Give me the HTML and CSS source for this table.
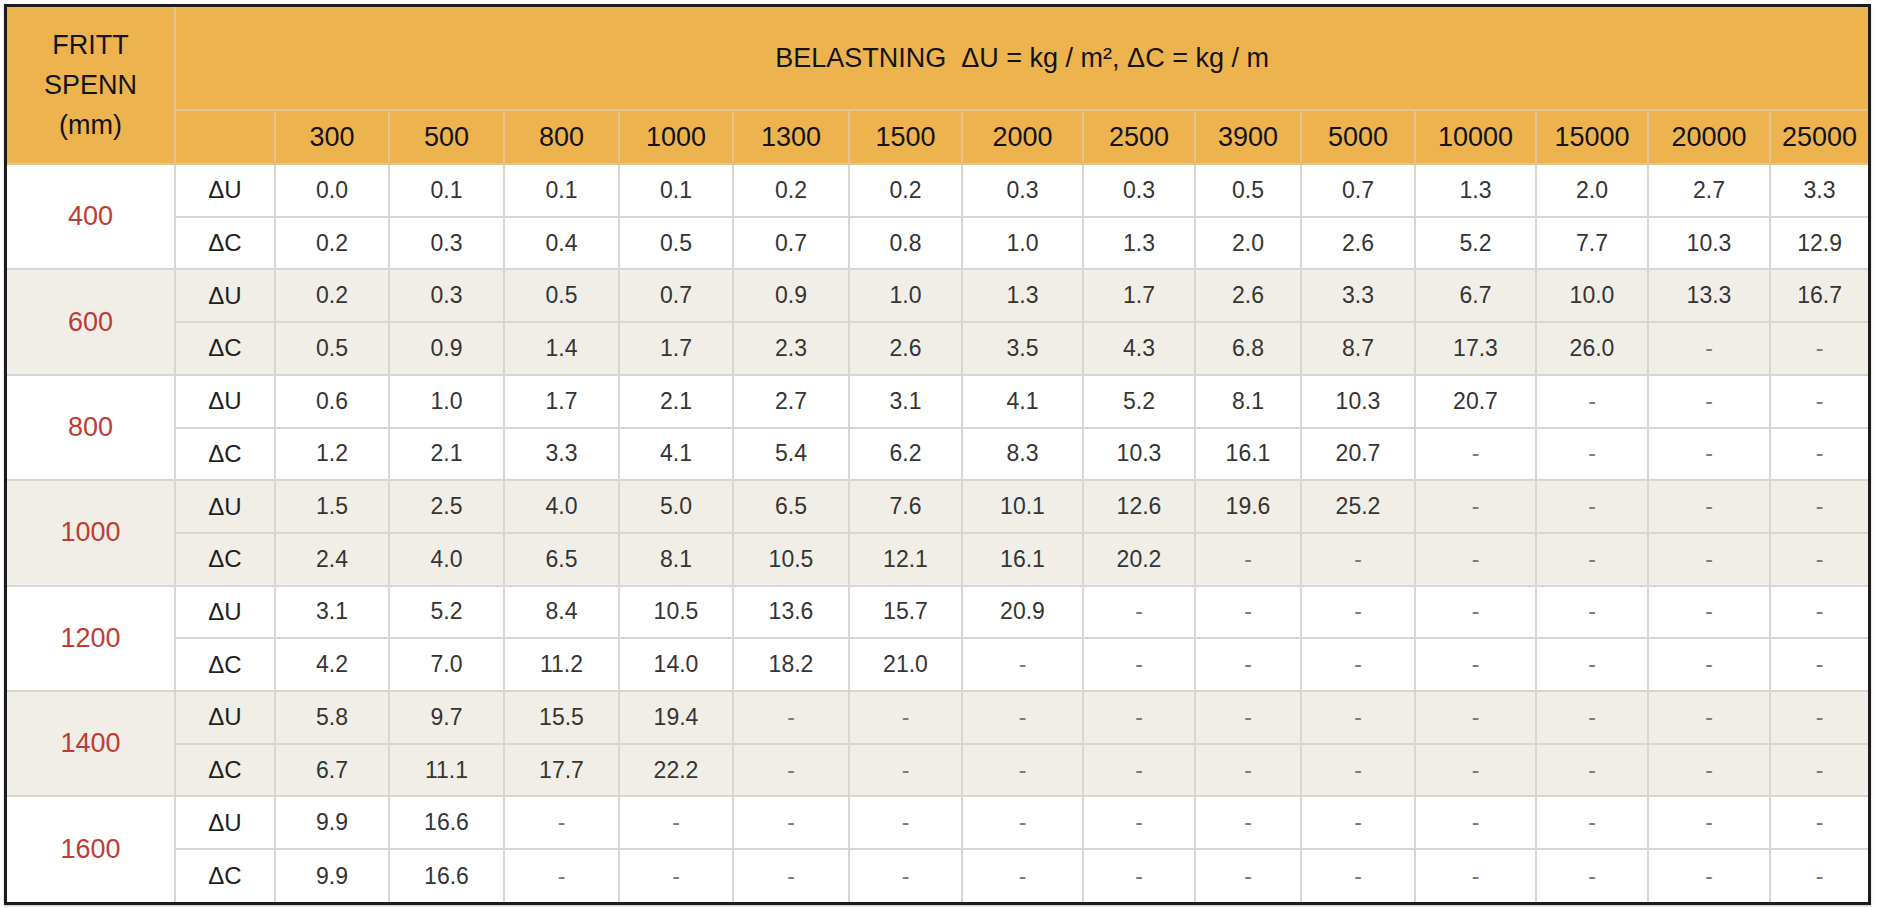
FILE: index.html
```html
<!DOCTYPE html>
<html lang="no">
<head>
<meta charset="utf-8">
<title>Belastning</title>
<link rel="stylesheet" href="styles.css">
</head>
<body>
<div class="frame">
<table class="load">
<colgroup>
<col class="c-span"><col class="c-lbl">
<col style="width:114px"><col style="width:115px"><col style="width:115px"><col style="width:114px">
<col style="width:116px"><col style="width:113px"><col style="width:121px"><col style="width:112px">
<col style="width:106px"><col style="width:114px"><col style="width:121px"><col style="width:112px">
<col style="width:122px"><col style="width:98px">
</colgroup>
<thead>
<tr class="h1">
<th rowspan="2" class="span-h">FRITT<br>SPENN<br>(mm)</th>
<th colspan="15" class="title">BELASTNING&nbsp; ΔU = kg / m², ΔC = kg / m</th>
</tr>
<tr class="h2">
<th></th><th>300</th><th>500</th><th>800</th><th>1000</th><th>1300</th><th>1500</th><th>2000</th><th>2500</th><th>3900</th><th>5000</th><th>10000</th><th>15000</th><th>20000</th><th>25000</th>
</tr>
</thead>
<tbody>
<tr><td rowspan="2" class="mm">400</td><td class="lbl">ΔU</td><td>0.0</td><td>0.1</td><td>0.1</td><td>0.1</td><td>0.2</td><td>0.2</td><td>0.3</td><td>0.3</td><td>0.5</td><td>0.7</td><td>1.3</td><td>2.0</td><td>2.7</td><td>3.3</td></tr>
<tr><td class="lbl">ΔC</td><td>0.2</td><td>0.3</td><td>0.4</td><td>0.5</td><td>0.7</td><td>0.8</td><td>1.0</td><td>1.3</td><td>2.0</td><td>2.6</td><td>5.2</td><td>7.7</td><td>10.3</td><td>12.9</td></tr>
<tr class="band"><td rowspan="2" class="mm">600</td><td class="lbl">ΔU</td><td>0.2</td><td>0.3</td><td>0.5</td><td>0.7</td><td>0.9</td><td>1.0</td><td>1.3</td><td>1.7</td><td>2.6</td><td>3.3</td><td>6.7</td><td>10.0</td><td>13.3</td><td>16.7</td></tr>
<tr class="band"><td class="lbl">ΔC</td><td>0.5</td><td>0.9</td><td>1.4</td><td>1.7</td><td>2.3</td><td>2.6</td><td>3.5</td><td>4.3</td><td>6.8</td><td>8.7</td><td>17.3</td><td>26.0</td><td class="d">-</td><td class="d">-</td></tr>
<tr><td rowspan="2" class="mm">800</td><td class="lbl">ΔU</td><td>0.6</td><td>1.0</td><td>1.7</td><td>2.1</td><td>2.7</td><td>3.1</td><td>4.1</td><td>5.2</td><td>8.1</td><td>10.3</td><td>20.7</td><td class="d">-</td><td class="d">-</td><td class="d">-</td></tr>
<tr><td class="lbl">ΔC</td><td>1.2</td><td>2.1</td><td>3.3</td><td>4.1</td><td>5.4</td><td>6.2</td><td>8.3</td><td>10.3</td><td>16.1</td><td>20.7</td><td class="d">-</td><td class="d">-</td><td class="d">-</td><td class="d">-</td></tr>
<tr class="band"><td rowspan="2" class="mm">1000</td><td class="lbl">ΔU</td><td>1.5</td><td>2.5</td><td>4.0</td><td>5.0</td><td>6.5</td><td>7.6</td><td>10.1</td><td>12.6</td><td>19.6</td><td>25.2</td><td class="d">-</td><td class="d">-</td><td class="d">-</td><td class="d">-</td></tr>
<tr class="band"><td class="lbl">ΔC</td><td>2.4</td><td>4.0</td><td>6.5</td><td>8.1</td><td>10.5</td><td>12.1</td><td>16.1</td><td>20.2</td><td class="d">-</td><td class="d">-</td><td class="d">-</td><td class="d">-</td><td class="d">-</td><td class="d">-</td></tr>
<tr><td rowspan="2" class="mm">1200</td><td class="lbl">ΔU</td><td>3.1</td><td>5.2</td><td>8.4</td><td>10.5</td><td>13.6</td><td>15.7</td><td>20.9</td><td class="d">-</td><td class="d">-</td><td class="d">-</td><td class="d">-</td><td class="d">-</td><td class="d">-</td><td class="d">-</td></tr>
<tr><td class="lbl">ΔC</td><td>4.2</td><td>7.0</td><td>11.2</td><td>14.0</td><td>18.2</td><td>21.0</td><td class="d">-</td><td class="d">-</td><td class="d">-</td><td class="d">-</td><td class="d">-</td><td class="d">-</td><td class="d">-</td><td class="d">-</td></tr>
<tr class="band"><td rowspan="2" class="mm">1400</td><td class="lbl">ΔU</td><td>5.8</td><td>9.7</td><td>15.5</td><td>19.4</td><td class="d">-</td><td class="d">-</td><td class="d">-</td><td class="d">-</td><td class="d">-</td><td class="d">-</td><td class="d">-</td><td class="d">-</td><td class="d">-</td><td class="d">-</td></tr>
<tr class="band"><td class="lbl">ΔC</td><td>6.7</td><td>11.1</td><td>17.7</td><td>22.2</td><td class="d">-</td><td class="d">-</td><td class="d">-</td><td class="d">-</td><td class="d">-</td><td class="d">-</td><td class="d">-</td><td class="d">-</td><td class="d">-</td><td class="d">-</td></tr>
<tr><td rowspan="2" class="mm">1600</td><td class="lbl">ΔU</td><td>9.9</td><td>16.6</td><td class="d">-</td><td class="d">-</td><td class="d">-</td><td class="d">-</td><td class="d">-</td><td class="d">-</td><td class="d">-</td><td class="d">-</td><td class="d">-</td><td class="d">-</td><td class="d">-</td><td class="d">-</td></tr>
<tr><td class="lbl">ΔC</td><td>9.9</td><td>16.6</td><td class="d">-</td><td class="d">-</td><td class="d">-</td><td class="d">-</td><td class="d">-</td><td class="d">-</td><td class="d">-</td><td class="d">-</td><td class="d">-</td><td class="d">-</td><td class="d">-</td><td class="d">-</td></tr>
</tbody>
</table>
</div>
</body>
</html>
```
FILE: styles.css
```css
html, body {
  margin: 0;
  padding: 0;
  background: #ffffff;
}

body {
  padding: 4px;
  font-family: "Liberation Sans", Arial, sans-serif;
}

.frame {
  width: 1861px;
  height: 895px;
  border: 3px solid #1c1c1c;
  background: #ffffff;
  box-shadow: 0 1px 2px rgba(0, 0, 0, 0.25);
}

.load {
  width: 1861px;
  height: 895px;
  border-collapse: collapse;
  border-style: hidden;
  table-layout: fixed;
}

.c-span { width: 168px; }
.c-lbl { width: 100px; }

.load th,
.load td {
  padding: 0;
  text-align: center;
  vertical-align: middle;
  border: 2px solid #d8d6d2;
}

.load thead th {
  background: #edb34f;
  color: #141414;
  font-weight: normal;
  font-size: 27px;
  border-color: #e2c592;
}

.h1 { height: 103px; }
.h2 { height: 54px; }

.span-h {
  line-height: 40px;
  padding-top: 2px;
}

.title {
  font-size: 26px;
  padding-bottom: 6px;
}

.load tbody tr { height: 52.7px; }

.load tbody td {
  font-size: 23px;
  color: #343434;
}

.load tbody tr.band td { background: #f1eee8; }

.load tbody td.mm {
  font-size: 27px;
  color: #c23b33;
}

.load tbody td.lbl {
  font-size: 24px;
  color: #1e1e1e;
}

.load tbody td.d {
  color: #7a7a7a;
}
```
